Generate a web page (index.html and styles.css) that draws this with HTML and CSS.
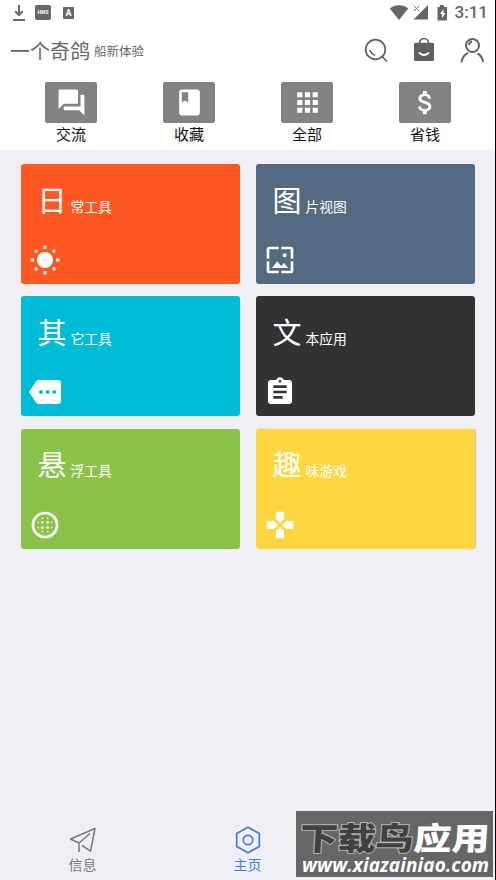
FILE: index.html
```html
<!DOCTYPE html>
<html lang="zh-CN">
<head>
<meta charset="utf-8">
<title>一个奇鸽</title>
<link rel="stylesheet" href="styles.css">
</head>
<body>
<div class="app">
  <header class="top">
    <div class="status">
      <svg class="st-download" width="14" height="17" viewBox="0 0 14 17"><path d="M7 0v8M3.200 6.200 7 10l3.800-3.800M1 15h12" fill="none" stroke="#666" stroke-width="2"/></svg>
      <span class="st-hms">HMS</span>
      <span class="st-a">A</span>
      <svg class="st-wifi" width="20" height="15" viewBox="0 0 20 15"><path d="M10 15 .8 3.500C6-.9 14-.9 19.200 3.500z" fill="#666"/></svg>
      <svg class="st-signal" width="16" height="15" viewBox="0 0 16 15"><path d="M15 0v14.500H.500z" fill="#666"/><path d="m1 1 5 5m0-5L1 6" stroke="#fff" stroke-width="3"/><path d="m1 1 5 5m0-5L1 6" stroke="#666"/></svg>
      <svg class="st-battery" width="11" height="16" viewBox="0 0 11 16"><path d="M3 0h4v2h3v13.500H.500V2H3z" fill="#666"/><path d="M6.500 4 3 9h2v4l3.500-5h-2z" fill="#fff"/></svg>
      <time class="clock">3:11</time>
    </div>
    <div class="titlebar">
      <h1>一个奇鸽</h1><span class="subtitle">船新体验</span>
      <nav class="actions">
        <svg width="24" height="26" viewBox="0 0 24 26" fill="none" stroke="#616161" stroke-width="1.700"><circle cx="11.500" cy="12.500" r="9.800"/><path d="m18 19.300 4.300 4.700M6 13.500q1.500 3.500 4.500 4.500" stroke-linecap="round"/></svg>
        <svg width="22" height="26" viewBox="0 0 22 26"><path d="M6.500 8V6a4.500 4.500 0 0 1 9 0v2" fill="none" stroke="#616161" stroke-width="1.700"/><rect x="1" y="5.700" width="20" height="18.300" rx="1.500" fill="#616161"/><path d="M6.500 16q4.500 4 9 0" fill="none" stroke="#fff" stroke-width="1.700" stroke-linecap="round"/></svg>
        <svg width="24" height="26" viewBox="0 0 24 26" fill="none" stroke="#616161" stroke-width="2"><circle cx="12.500" cy="8.500" r="6.500"/><path d="M1.500 25.500c.5-5 3-8 6.700-9.700M17.500 16.500c3 1.500 5 4.500 5.500 8.500M9 8q.5-3 3-3.500"/></svg>
      </nav>
    </div>
    <nav class="shortcuts">
      <a class="shortcut"><span class="tile"><svg viewBox="0 0 24 24"><path d="M21 6h-2v9H6v2c0 .55.45 1 1 1h11l4 4V7c0-.55-.45-1-1-1zm-4 6V3c0-.55-.45-1-1-1H3c-.55 0-1 .45-1 1v14l4-4h10c.55 0 1-.45 1-1z"/></svg></span>交流</a>
      <a class="shortcut"><span class="tile"><svg viewBox="0 0 24 24"><path d="M18 2H6c-1.100 0-2 .9-2 2v16c0 1.100.9 2 2 2h12c1.100 0 2-.9 2-2V4c0-1.100-.9-2-2-2zM6 4h5v8l-2.500-1.500L6 12V4z"/></svg></span>收藏</a>
      <a class="shortcut"><span class="tile"><svg viewBox="0 0 24 24"><path d="M4 8h4V4H4zm6 12h4v-4h-4zm-6 0h4v-4H4zm0-6h4v-4H4zm6 0h4v-4h-4zm6-10v4h4V4zm-6 4h4V4h-4zm6 6h4v-4h-4zm0 6h4v-4h-4z"/></svg></span>全部</a>
      <a class="shortcut"><span class="tile"><svg viewBox="0 0 24 24"><path d="M11.800 10.900c-2.270-.59-3-1.200-3-2.150 0-1.090 1.010-1.850 2.700-1.850 1.780 0 2.440.85 2.500 2.100h2.210c-.07-1.720-1.120-3.300-3.210-3.810V3h-3v2.160c-1.940.42-3.500 1.680-3.500 3.610 0 2.310 1.910 3.460 4.700 4.130 2.500.6 3 1.480 3 2.410 0 .69-.49 1.790-2.700 1.790-2.060 0-2.870-.92-2.980-2.100h-2.200c.12 2.190 1.760 3.420 3.680 3.830V21h3v-2.150c1.950-.37 3.500-1.500 3.500-3.550 0-2.840-2.430-3.810-4.700-4.400z"/></svg></span>省钱</a>
    </nav>
  </header>

  <main class="cards">
    <section class="card orange">
      <h2><b>日</b>常工具</h2>
      <svg viewBox="0 0 24 24"><circle cx="12" cy="12" r="6"/><path d="M12 1.200v2.500m0 16.600v2.500M1.200 12h2.500m16.600 0h2.500M4.500 4.500l1.600 1.600m11.800 11.800 1.600 1.600m0-15-1.600 1.600M6.100 17.900l-1.600 1.600" stroke="#fff" stroke-width="2.200"/></svg>
    </section>
    <section class="card slate">
      <h2><b>图</b>片视图</h2>
      <svg viewBox="0 0 24 24"><path d="M4 4h7V2H4c-1.100 0-2 .9-2 2v7h2V4zm6 9-4 5h12l-3-4-2.030 2.710L10 13zm7-4.500c0-.83-.67-1.500-1.500-1.500S14 7.670 14 8.500s.67 1.500 1.500 1.500S17 9.330 17 8.500zM20 2h-7v2h7v7h2V4c0-1.100-.9-2-2-2zm0 18h-7v2h7c1.100 0 2-.9 2-2v-7h-2v7zM4 13H2v7c0 1.100.9 2 2 2h7v-2H4v-7z"/></svg>
    </section>
    <section class="card cyan">
      <h2><b>其</b>它工具</h2>
      <svg viewBox="0 0 24 24"><path d="M22 3H7c-.69 0-1.230.35-1.590.88L0 12l5.410 8.110c.36.53.97.89 1.660.89H22c1.100 0 2-.9 2-2V5c0-1.100-.9-2-2-2zM9 13.500c-.83 0-1.500-.67-1.500-1.500s.67-1.500 1.500-1.500 1.500.67 1.500 1.500-.67 1.500-1.500 1.500zm5 0c-.83 0-1.500-.67-1.500-1.500s.67-1.500 1.500-1.500 1.500.67 1.500 1.500-.67 1.500-1.500 1.500zm5 0c-.83 0-1.500-.67-1.500-1.500s.67-1.500 1.500-1.500 1.500.67 1.500 1.500-.67 1.500-1.500 1.500z"/></svg>
    </section>
    <section class="card dark">
      <h2><b>文</b>本应用</h2>
      <svg viewBox="0 0 24 24"><path d="M19 3h-4.180C14.400 1.840 13.300 1 12 1c-1.300 0-2.400.84-2.820 2H5c-1.100 0-2 .9-2 2v14c0 1.100.9 2 2 2h14c1.100 0 2-.9 2-2V5c0-1.100-.9-2-2-2zm-7 0c.55 0 1 .45 1 1s-.45 1-1 1-1-.45-1-1 .45-1 1-1zm2 14H7v-2h7v2zm3-4H7v-2h10v2zm0-4H7V7h10v2z"/></svg>
    </section>
    <section class="card green">
      <h2><b>悬</b>浮工具</h2>
      <svg viewBox="0 0 24 24"><circle cx="12" cy="12" r="9" fill="none" stroke="#fff" stroke-width="2"/><g><circle cx="10" cy="10" r="1"/><circle cx="14" cy="10" r="1"/><circle cx="10" cy="14" r="1"/><circle cx="14" cy="14" r="1"/><circle cx="10" cy="7" r=".6"/><circle cx="14" cy="7" r=".6"/><circle cx="10" cy="17" r=".6"/><circle cx="14" cy="17" r=".6"/><circle cx="7" cy="10" r=".6"/><circle cx="7" cy="14" r=".6"/><circle cx="17" cy="10" r=".6"/><circle cx="17" cy="14" r=".6"/></g></svg>
    </section>
    <section class="card yellow">
      <h2><b>趣</b>味游戏</h2>
      <svg viewBox="0 0 24 24"><path d="M15 7.500V2H9v5.500l3 3 3-3zM7.500 9H2v6h5.500l3-3-3-3zM9 16.500V22h6v-5.500l-3-3-3 3zM16.500 9l-3 3 3 3H22V9h-5.500z"/></svg>
    </section>
  </main>

  <footer class="tabs">
    <a class="tab"><svg width="28" height="28" viewBox="0 0 28 28" fill="none" stroke="#7a7a7a" stroke-width="1.500" stroke-linejoin="round"><path d="M10 26v-9L1.500 13 26 2.500 21.500 25 13 19.500M10 17l11-9.500"/></svg>信息</a>
    <a class="tab active"><svg width="28" height="28" viewBox="0 0 28 28" fill="none" stroke="#3f7fe0" stroke-width="1.700"><path d="m14 1.200 11.300 6.300v13L14 26.800 2.700 20.500v-13z"/><circle cx="14" cy="14" r="4.700"/></svg>主页</a>
    <span class="tab"></span>
  </footer>

  <aside class="watermark">
    <div class="wm-name"><span class="wm-dark">下载鸟</span><span class="wm-light">应用</span></div>
    <div class="wm-url">www.xiazainiao.com</div>
  </aside>
</div>
</body>
</html>
```
FILE: styles.css
```css
* { box-sizing: border-box; }
body {
  margin: 0;
  background: #000;
  font-family: "Noto Sans CJK SC", sans-serif;
}
.app {
  position: relative;
  display: flex;
  flex-direction: column;
  width: 495px;
  height: 880px;
  background: #efeff4;
  overflow: hidden;
}
.top {
  height: 150px;
  background: #fff;
}
.status {
  display: flex;
  align-items: center;
  height: 25px;
  padding: 0 7px 0 12px;
}
.st-download { margin-top: 1px; }
.st-hms {
  width: 16px;
  height: 15px;
  margin-left: 9px;
  border-radius: 2px;
  background: #666;
  color: #fff;
  font: bold 5px/15px "Liberation Sans", sans-serif;
  text-align: center;
}
.st-a {
  width: 11px;
  height: 12px;
  margin-left: 12px;
  border-radius: 1px;
  background: #666;
  color: #fff;
  font: bold 9px/12px Roboto, sans-serif;
  text-align: center;
}
.st-wifi { margin-left: auto; }
.st-signal { margin-left: 4px; }
.st-battery { margin-left: 8px; }
.clock {
  margin-left: 7px;
  color: #666;
  font: 500 17px/25px Roboto, sans-serif;
}
.titlebar {
  display: flex;
  align-items: center;
  height: 51px;
  padding: 0 11px 0 10px;
  color: #666;
}
h1 {
  margin: 0;
  font-size: 20px;
  font-weight: 400;
  line-height: 30px;
}
.subtitle {
  margin-left: 4px;
  font-size: 12.500px;
}
.actions {
  display: flex;
  gap: 25px;
  margin: -2px 0 0 auto;
}
.shortcuts {
  display: grid;
  grid-template-columns: repeat(4, 118px);
  padding: 6px 0 0 12px;
}
.shortcut {
  display: flex;
  flex-direction: column;
  align-items: center;
  color: #111;
  font-size: 15px;
  line-height: 21px;
}
.tile {
  display: flex;
  align-items: center;
  justify-content: center;
  width: 52px;
  height: 41px;
  border-radius: 2px;
  background: #838383;
}
.tile svg { width: 31px; height: 31px; fill: #fff; }
.cards {
  display: grid;
  grid-template-columns: 219px 219px;
  grid-auto-rows: 120px;
  gap: 12.400px 16px;
  padding: 14px 0 0 21px;
}
.card {
  display: flex;
  flex-direction: column;
  justify-content: space-between;
  align-items: flex-start;
  padding: 12.500px 8px 8px 7.500px;
  border-radius: 3px;
}
.card h2 {
  margin: 0 0 0 9px;
  color: #fff;
  font-size: 13.800px;
  font-weight: 400;
  line-height: 44px;
}
.card b {
  margin-right: 4px;
  font-size: 29px;
  font-weight: 400;
}
.card svg { width: 32px; height: 32px; fill: #fff; }
.orange { background: #ff5722; }
.slate { background: #546a83; }
.cyan { background: #00bcd6; }
.dark { background: #323232; }
.green { background: #8bc34a; }
.yellow { background: #fed740; box-shadow: 1px 0 1px #c9c5b8; }
.tabs {
  display: grid;
  grid-template-columns: repeat(3, 1fr);
  height: 54px;
  margin-top: auto;
}
.tab {
  display: flex;
  flex-direction: column;
  align-items: center;
  color: #7a7a7a;
  font-size: 14px;
  line-height: 20px;
}
.active { color: #3f7fe0; }
.watermark {
  position: absolute;
  left: 296px;
  top: 811px;
  width: 197px;
  height: 66px;
  padding: 10px 0 0 4px;
  background: #666;
  white-space: nowrap;
}
.wm-name {
  display: flex;
  width: 165px;
  font-size: 33px;
  font-weight: 900;
  line-height: 33px;
  transform: scale(1.15, .96) skewX(-3deg);
  transform-origin: 0 50%;
}
.wm-dark {
  color: #404040;
  -webkit-text-stroke: 2px #b5b5b5;
  paint-order: stroke;
}
.wm-light { color: #fff; }
.wm-url {
  margin-left: 2px;
  color: #fff;
  font: italic bold 19px/22px "Open Sans", sans-serif;
  letter-spacing: .1px;
}
```
